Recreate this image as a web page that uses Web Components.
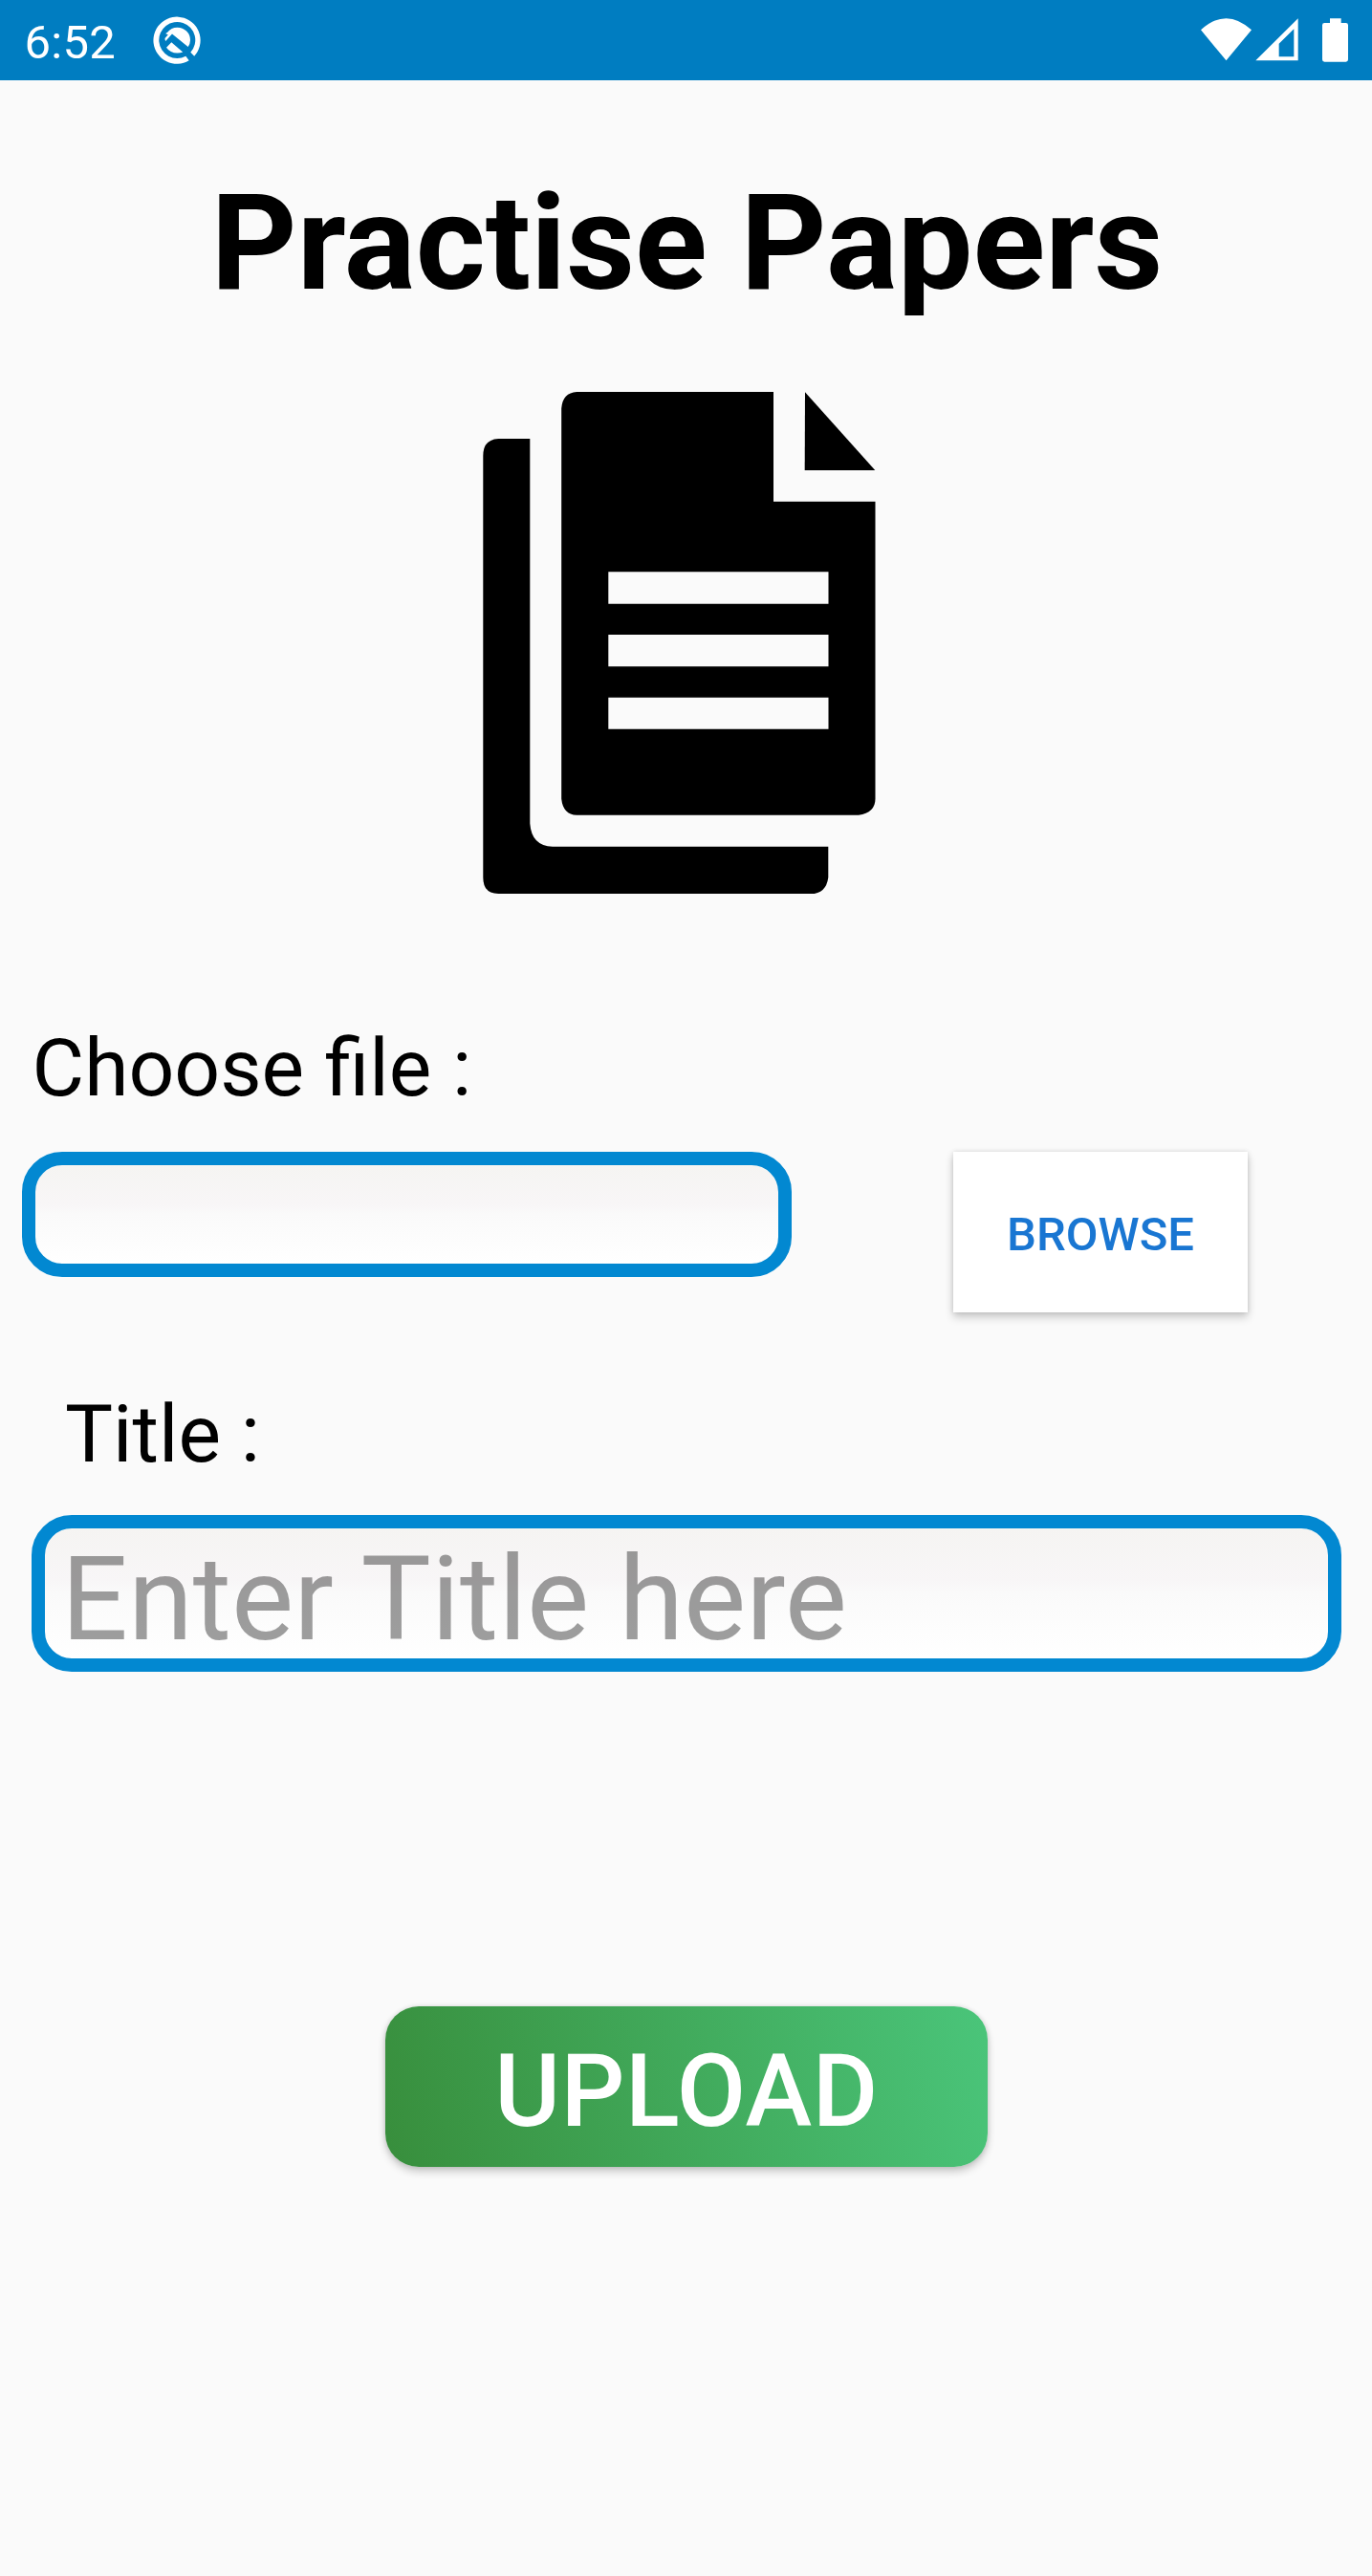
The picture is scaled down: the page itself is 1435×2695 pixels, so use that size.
<!DOCTYPE html>
<html lang="en">
<head>
<meta charset="utf-8">
<title>Practise Papers</title>
<style>
  html, body { margin: 0; }
  body { background: #fafafa; color: #000; font-family: Roboto, "Noto Sans", sans-serif; }
</style>
</head>
<body>
<upload-screen></upload-screen>

<script>
const define = (name, html) => {
  const template = document.createElement('template');
  template.innerHTML = html;
  customElements.define(name, class extends HTMLElement {
    constructor() {
      super();
      this.attachShadow({ mode: 'open' }).append(template.content.cloneNode(true));
    }
  });
};

define('status-bar', `
  <style>
    :host { display: flex; justify-content: space-between; height: 84px; background: #007dc1; color: #fff; }
    .left { display: flex; padding-left: 25.500px; }
    .time { width: 130.500px; font-size: 49px; line-height: 57px; padding-top: 16px; letter-spacing: .3px; white-space: nowrap; }
    svg { display: block; fill: #fff; }
  </style>
  <div class="left">
    <div class="time"><slot></slot></div>
    <svg width="60" height="84" viewBox="0 0 60 84">
      <path d="M41.700 63.300A24.600 24.600 0 1 1 47.200 58.800L43.300 54.800A19 19 0 1 0 38.300 58.700Z"/>
      <path d="M17.300 35.200Q17.700 34.500 19 34Q23 28.700 29.500 28.700A13.500 13.300 0 0 1 43 42Q43 45.500 40.700 49L24 35.500L17.200 43Q16.300 41.500 16.500 40L19.800 36.200Z"/>
      <path d="M18 49.800L23.300 44.300L35.200 54.500Q32.500 55.600 29.500 55.600Q22 55.600 18 49.800Z"/>
    </svg>
  </div>
  <svg width="215" height="84" viewBox="0 0 645 252">
    <path d="M108 94Q187.500 21 267 94L187.500 190Z"/>
    <path fill-rule="evenodd" d="M280 190L413 58V190ZM353 137V178H400V91Z"/>
    <path d="M513 58H548V72H563Q570 72 570 79V187Q570 194 563 194H496Q489 194 489 187V79Q489 72 496 72H513Z"/>
  </svg>
`);

define('papers-icon', `
  <style>:host { display: block; } svg { display: block; }</style>
  <svg width="440" height="600" viewBox="0 0 440 560" preserveAspectRatio="none">
    <path d="M64.300 64.300H31.300Q15.300 65 15.300 81.300V492.700Q15.300 508.700 31.300 508.700H358Q374 508.700 376.300 492.700V462.700H88Q66 462 64.300 440Z"/>
    <path fill-rule="evenodd" d="M113.200 18.700H319V125.700H425.500V416Q425.500 429.500 408 432H113.200Q99 431.500 97.200 416V34.700Q98.500 19.500 113.200 18.700ZM146.300 194.300V225.700H376.500V194.300ZM146.300 255.700V286.700H376.500V255.700ZM146.300 317V348H376.500V317Z"/>
    <path d="M352 19L425.300 95.300H351.700Z"/>
  </svg>
`);

define('outlined-field', `
  <style>
    :host { display: block; box-sizing: border-box; border: 14px solid #0288d1; border-radius: 42px;
      background: linear-gradient(#f5f4f2, #f8f6f7 40%, #fafafa 50%, #fff) padding-box;
      color: rgba(0,0,0,.38); font-size: 123px; line-height: 144px; white-space: nowrap; word-spacing: .5px; }
  </style>
  <slot></slot>
`);

define('raised-button', `
  <style>
    :host { display: flex; align-items: center; justify-content: center; box-sizing: border-box; height: 168px;
      font-weight: 500; text-transform: uppercase; white-space: nowrap;
      box-shadow: 0 5px 9px rgba(0,0,0,.2), 0 0 5px rgba(0,0,0,.12); }
  </style>
  <slot></slot>
`);

define('upload-screen', `
  <style>
    :host { display: flex; flex-direction: column; height: 2695px; background: #fafafa; }
    h1 { margin: 88px 0 0; font-size: 140px; line-height: 164px; font-weight: 700; text-align: center; white-space: nowrap; padding-left: 2px; }
    papers-icon { margin: 54px 0 0 490px; }
    .label { font-size: 84px; line-height: 98px; white-space: nowrap; }
    .choose { margin: 79px 0 0 33.500px; word-spacing: .8px; }
    .row { display: flex; align-items: flex-start; margin: 38px 0 0 23px; height: 168px; }
    .row outlined-field { width: 805px; height: 131px; margin-right: 169px; }
    .browse { width: 308px; background: #fff; color: #1976d2; font-size: 49px; padding-top: 4px; }
    .title { margin: 79px 0 0 68px; }
    .entry { margin: 35px 32px 0 33px; height: 164px; padding: 2px 0 0 17px; }
    .upload { width: 630px; margin: 350px 0 0 403px; border-radius: 35px; color: #fff; font-size: 105px; padding-top: 10px; letter-spacing: .5px;
      background: linear-gradient(75.070deg, #388e3c, #4ac57a); }
  </style>
  <status-bar>6:52</status-bar>
  <h1>Practise Papers</h1>
  <papers-icon></papers-icon>
  <div class="label choose">Choose file :</div>
  <div class="row">
    <outlined-field></outlined-field>
    <raised-button class="browse">Browse</raised-button>
  </div>
  <div class="label title">Title :</div>
  <outlined-field class="entry">Enter Title here</outlined-field>
  <raised-button class="upload">Upload</raised-button>
`);
</script>
</body>
</html>
